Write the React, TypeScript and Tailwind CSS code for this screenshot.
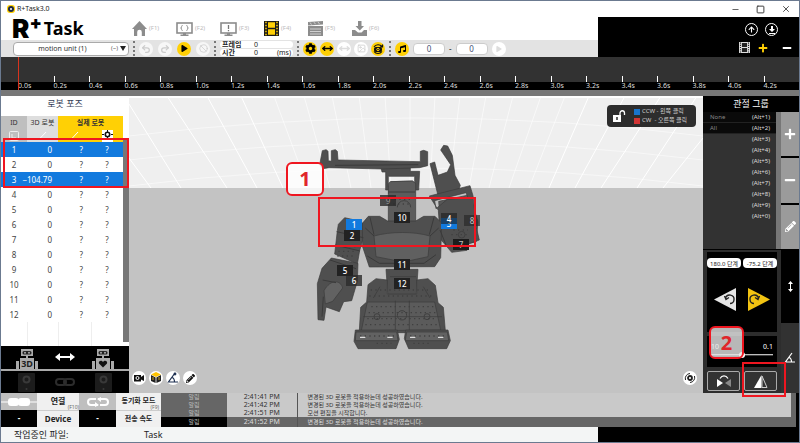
import type { ReactNode } from 'react';
import { Undo2, Redo2, Ban, MoveHorizontal, Image, Minus, Square, X } from 'lucide-react';
import { FaPlay, FaPlus, FaMinus, FaPencilAlt, FaMusic, FaArrowUp, FaCog } from 'react-icons/fa';

const poses = [
  { id: 1, value: '0', selected: true },
  { id: 2, value: '0', selected: false },
  { id: 3, value: '−104.79', selected: true },
  { id: 4, value: '0', selected: false },
  { id: 5, value: '0', selected: false },
  { id: 6, value: '0', selected: false },
  { id: 7, value: '0', selected: false },
  { id: 8, value: '0', selected: false },
  { id: 9, value: '0', selected: false },
  { id: 10, value: '0', selected: false },
  { id: 11, value: '0', selected: false },
  { id: 12, value: '0', selected: false },
];

const ticks = Array.from({ length: 22 }, (_, i) => `${(i * 0.2).toFixed(1)}s`);

const joints = [
  { id: 9, pos: 'left-[64px] top-[55px]', color: 'bg-[#2a2a2a]/80 text-[#8a8a8a]' },
  { id: 8, pos: 'left-[148px] top-[75px]', color: 'bg-[#2a2a2a]/70 text-[#bbb]' },
  { id: 7, pos: 'left-[137px] top-[99px]', color: 'bg-[#1c1c1c] text-[#bbb]' },
  { id: 6, pos: 'left-[30px] top-[135px]', color: 'bg-[#2a2a2a]/80 text-white' },
  { id: 5, pos: 'left-[21px] top-[125px]', color: 'bg-[#222] text-white' },
  { id: 2, pos: 'left-[28px] top-[90px]', color: 'bg-[#222] text-white' },
  { id: 1, pos: 'left-[30px] top-[79px]', color: 'bg-[#127ade] text-white' },
  { id: 10, pos: 'left-[78px] top-[72px]', color: 'bg-[#222] text-white' },
  { id: 11, pos: 'left-[78px] top-[119px]', color: 'bg-[#222] text-white' },
  { id: 12, pos: 'left-[78px] top-[138px]', color: 'bg-[#222] text-white' },
  { id: 3, pos: 'left-[125px] top-[78px]', color: 'bg-[#127ade] text-white' },
  { id: 4, pos: 'left-[125px] top-[73px]', color: 'bg-[#1c1c1c]/60 text-white' },
];

const groups = [
  { name: 'None', key: '(Alt+1)' },
  { name: 'All', key: '(Alt+2)' },
  { name: '', key: '(Alt+3)' },
  { name: '', key: '(Alt+4)' },
  { name: '', key: '(Alt+5)' },
  { name: '', key: '(Alt+6)' },
  { name: '', key: '(Alt+7)' },
  { name: '', key: '(Alt+8)' },
  { name: '', key: '(Alt+9)' },
  { name: '', key: '(Alt+0)' },
];

const logs = [
  { time: '2:41:41 PM', text: '변경된 3D 로봇을 적용하는데 성공하였습니다.' },
  { time: '2:41:42 PM', text: '변경된 3D 로봇을 적용하는데 성공하였습니다.' },
  { time: '2:41:51 PM', text: '모션 편집을 시작합니다.' },
  { time: '2:41:52 PM', text: '변경된 3D 로봇을 적용하는데 성공하였습니다.' },
];

const MonitorIcon = ({ children }: { children: ReactNode }) => (
  <svg viewBox="0 0 17 14" className="h-3.5 w-[17px] shrink-0">
    <rect x="1" y="1" width="15" height="10" fill="#fff" stroke="#8c8c8c" strokeWidth="1.6" />
    <path d="M7 11h3v1.500h2.500V14h-8v-1.500H7z" fill="#8c8c8c" />
    {children}
  </svg>
);

const FilmIcon = ({ frame, cell }: { frame: string; cell: string }) => (
  <svg viewBox="0 0 15 15" className="h-full w-full">
    <rect width="15" height="15" fill={frame} />
    <path d="M4 1.200h7v5.600H4zM4 8.200h7v5.600H4z" fill={cell} />
    <path d="M2 .8v14M13 .8v14" stroke={cell} strokeWidth="1.500" strokeDasharray="1.500 1.500" />
  </svg>
);

const menu = [
  {
    key: '(F1)',
    icon: (
      <svg viewBox="0 0 15 15" className="h-[15px] w-[15px]" fill="#8c8c8c">
        <path d="M7.500 0 15 8h-2v7H9.800v-4a2.300 2.300 0 0 0-4.600 0v4H2V8H0z" />
      </svg>
    ),
  },
  {
    key: '(F2)',
    icon: (
      <MonitorIcon>
        <path d="M6.500 3.500c-1 0-.9.6-.9 1.300S5.200 6 4.700 6c.5 0 .9.500.9 1.200s-.1 1.300.9 1.300M10.500 3.500c1 0 .9.600.9 1.300s.4 1.200.9 1.200c-.5 0-.9.500-.9 1.200s.1 1.300-.9 1.300" fill="none" stroke="#8c8c8c" />
      </MonitorIcon>
    ),
  },
  {
    key: '(F3)',
    icon: (
      <MonitorIcon>
        <path d="M8.500 3v4M8.500 8v1.200" stroke="#777" strokeWidth="1.300" />
      </MonitorIcon>
    ),
  },
  { key: '(F4)', icon: <span className="h-[15px] w-[15px]"><FilmIcon frame="#1a1a1a" cell="#ffd005" /></span> },
  {
    key: '(F5)',
    icon: (
      <svg viewBox="0 0 15 15" className="h-[15px] w-[15px]" fill="#8c8c8c">
        <path d="M0 5h15v10H0zM0 1l15-1v3.500L0 4.500z" />
        <path d="m2 1.500 1.500 2M6 1.200l1.500 2M10 1l1.500 2M2 8h11M2 10.500h11M2 13h11" stroke="#fff" strokeWidth=".6" />
      </svg>
    ),
  },
  {
    key: '(F6)',
    icon: (
      <svg viewBox="0 0 15 15" className="h-[15px] w-[15px]" fill="#8c8c8c">
        <path d="M6 0h3.500v5H12l-4.200 4.500L3.500 5H6z" />
        <path d="M0 9h3l3 2.500h3.500L12 9h3v6H0z" />
      </svg>
    ),
  },
];

const Dots = () => <span className="h-[15px] border-l-2 border-dotted border-[#777]" />;

function Round({ label, color, children }: { label: string; color: string; children: ReactNode }) {
  return (
    <button aria-label={label} className={`flex h-3.5 w-3.5 shrink-0 items-center justify-center rounded-full ${color}`}>
      {children}
    </button>
  );
}

function TitleBar() {
  return (
    <div className="flex h-4 items-center bg-white pl-1.5 pr-2">
      <svg viewBox="0 0 8 8" className="mr-0.5 h-2 w-2">
        <rect width="8" height="8" rx="3" fill="#ffd005" />
        <circle cx="4" cy="4" r="3" fill="#1d2942" />
        <circle cx="4" cy="4" r="1" fill="#fff" />
      </svg>
      <span className="flex-1 text-[7px] text-[#222]">R+Task3.0</span>
      <div className="flex gap-4 text-[#333]">
        <button aria-label="Minimize"><Minus size={9} strokeWidth={2} /></button>
        <button aria-label="Maximize"><Square size={9} strokeWidth={2.5} /></button>
        <button aria-label="Close"><X size={10} strokeWidth={2} /></button>
      </div>
    </div>
  );
}

function Header() {
  return (
    <header className="flex">
      <div className="min-w-0 flex-1 bg-white">
        <div className="flex h-[23px] items-center">
          <div className="flex w-[131px] shrink-0 pl-[11px] leading-none text-black">
            <span className="font-['Inter',sans-serif] text-[26px] leading-[23px] font-black">R</span>
            <span className="font-['Inter',sans-serif] text-[18px] leading-3 font-black">+</span>
            <span className="pt-px pl-0.5 text-[18px] leading-5 font-bold">Task</span>
          </div>
          <nav className="flex">
            {menu.map((m) => (
              <button key={m.key} className="flex w-11 items-center gap-0.5 text-[6px] text-[#bbb]">
                {m.icon}
                {m.key}
              </button>
            ))}
          </nav>
        </div>
        <div className="flex h-[17px] items-center bg-[#e3e3e3] pl-3">
          <div className="mr-1 flex h-3.5 w-[116px] items-center rounded-sm border border-[#aaa] bg-white pr-0.5">
            <select aria-label="모션 유닛" className="min-w-0 flex-1 appearance-none text-center text-[7px] leading-3 text-[#333]">
              <option>motion unit (1)</option>
            </select>
            <span className="mr-0.5 text-[6px] text-[#666]">(~)</span>
            <svg viewBox="0 0 6 5" className="h-[5px] w-1.5"><path d="M0 0h6L3 5z" fill="#222" /></svg>
          </div>
          <Dots />
          <div className="mx-1 flex gap-[5px]">
            <Round label="실행 취소" color="bg-[#f7f7f7] text-[#ccc]"><Undo2 size={10} strokeWidth={3} /></Round>
            <Round label="다시 실행" color="bg-[#f7f7f7] text-[#ccc]"><Redo2 size={10} strokeWidth={3} /></Round>
            <Round label="재생" color="bg-[#ffd005] text-black"><FaPlay size={7} /></Round>
            <Round label="정지" color="bg-[#f7f7f7] text-[#ccc]"><Ban size={9} strokeWidth={2} /></Round>
          </div>
          <Dots />
          <div className="mx-1 flex w-[73px] flex-col gap-px text-[7px] leading-[7px] text-[#222]">
            <label className="flex h-[7px] items-center rounded-sm bg-white pl-0.5">
              <span className="w-5 shrink-0 font-bold">프레임</span>
              <input className="w-7 text-center" defaultValue="0" />
            </label>
            <label className="flex h-[7px] items-center rounded-sm bg-white pl-0.5">
              <span className="w-5 shrink-0 font-bold">시간</span>
              <input className="w-7 text-center" defaultValue="0" />
              <span className="flex-1 pr-0.5 text-right">(ms)</span>
            </label>
          </div>
          <Dots />
          <div className="mx-1 flex gap-[3px]">
            <Round label="설정" color="bg-[#ffd005] text-black"><FaCog size={11} /></Round>
            <Round label="폭 맞춤" color="bg-[#ffd005] text-black"><MoveHorizontal size={11} strokeWidth={3} /></Round>
            <Round label="간격" color="bg-white text-[#ddd]"><MoveHorizontal size={11} strokeWidth={3} /></Round>
            <Round label="그림" color="bg-white text-[#ccc]"><Image size={9} strokeWidth={2} /></Round>
            <Round label="회전" color="bg-[#ffd005] text-black">
              <svg viewBox="0 0 12 12" className="h-3 w-3" fill="none" stroke="#111">
                <path d="M2 8.500a5 5 0 0 0 8 0M2 4a5 5 0 0 1 8-.5M10.500 1.500v2.500H8" strokeWidth="1.200" />
                <rect x="2.500" y="4.500" width="7" height="4" rx="1" fill="#111" />
                <circle cx="6" cy="6.500" r="1.200" stroke="#ffd005" />
              </svg>
            </Round>
          </div>
          <Dots />
          <div className="ml-1 flex items-center gap-1 text-[8px] text-[#445073]">
            <Round label="음악" color="bg-[#ffd005] text-black"><FaMusic size={8} /></Round>
            <input aria-label="시작" className="h-3 w-8 rounded-sm border border-[#ccc] bg-white text-center" defaultValue="0" />
            <span className="text-[#222]">-</span>
            <input aria-label="끝" className="h-3 w-8 rounded-sm border border-[#ccc] bg-white text-center" defaultValue="0" />
            <Round label="음악 재생" color="bg-white text-[#ddd]"><FaPlay size={6} /></Round>
          </div>
        </div>
      </div>
      <div className="flex w-[201px] flex-col items-end justify-between bg-black pt-1.5 pb-1 pr-[7px] text-white">
        <div className="flex gap-[7px] pr-3.5">
          <button aria-label="올리기" className="flex h-[13px] w-[13px] items-center justify-center rounded-full border border-white"><FaArrowUp size={7} /></button>
          <button aria-label="내리기" className="flex h-[13px] w-[13px] items-center justify-center rounded-full border border-white">
            <svg viewBox="0 0 8 8" className="h-2 w-2" fill="#fff"><path d="M3 0h2v3h2L4 6 1 3h2zM1 7h6v1H1z" /></svg>
          </button>
        </div>
        <div className="flex items-center">
          <button aria-label="프레임 보기" className="mr-2 h-[11px] w-[11px]"><FilmIcon frame="#ddd" cell="#222" /></button>
          <button aria-label="추가" className="mr-3.5 text-[#ffd005]"><FaPlus size={10} /></button>
          <button aria-label="삭제"><FaMinus size={10} /></button>
        </div>
      </div>
    </header>
  );
}

function Timeline() {
  return (
    <div className="relative border-b-[6px] border-[#777] bg-gradient-to-b from-[#323232] from-75% to-black to-75% pl-[17px]">
      <div className="grid h-[33px] grid-cols-22 items-end">
        {ticks.map((t) => (
          <div key={t} className="flex flex-col text-[7px] leading-2 text-[#ddd]">
            <span className="h-1.5 w-px bg-white" />
            <span>{t}</span>
          </div>
        ))}
      </div>
      <span className="absolute top-0 left-[17px] h-[33px] w-px bg-[#d8331d]" />
    </div>
  );
}

const RobotIcon = ({ children }: { children: ReactNode }) => (
  <svg viewBox="0 0 22 20" className="h-5 w-[22px]" fill="#aaa">
    <path d="M5 0h12v7H5zM10 7h2v3h-2zM4 9h14v11H4zM0 12h3v8H0zM19 12h3v8h-3z" />
    <rect x="6.500" y="2" width="9" height="3.500" rx="1.500" fill="#222" />
    <circle cx="9" cy="3.700" r="1" />
    <circle cx="13" cy="3.700" r="1" />
    {children}
  </svg>
);

const DeviceIcon = () => (
  <svg viewBox="0 0 17 19" className="h-[19px] w-[17px]">
    <rect width="17" height="19" rx="1" fill="#1c1c1c" />
    <circle cx="8.500" cy="6.500" r="3" fill="none" stroke="#393939" strokeWidth="2" />
    <circle cx="8.500" cy="16" r="1" fill="#393939" />
  </svg>
);

function PosePanel() {
  return (
    <aside className="relative flex w-32 shrink-0 flex-col bg-white">
      <h2 className="h-5 pt-0.5 text-center text-[9px] leading-3 text-[#333c55]">로봇 포즈</h2>
      <div className="flex flex-1">
        <table className="h-fit w-[122px] table-fixed border-collapse text-[8px] text-[#444]">
          <colgroup>
            <col className="w-[26px]" />
            <col className="w-[31px]" />
            <col className="w-[33px]" />
            <col className="w-8" />
          </colgroup>
          <thead>
            <tr className="h-[13px] text-[7px] leading-3 text-[#333]">
              <th className="bg-[#bfbfbf] font-normal">ID</th>
              <th className="bg-[#dedede] font-normal">3D 로봇</th>
              <th colSpan={2} className="bg-[#ffd005] font-bold">실제 로봇</th>
            </tr>
            <tr className="h-[13px]">
              <td className="bg-[#bfbfbf]">
                <svg viewBox="0 0 10 10" className="mx-auto h-2.5 w-2.5" fill="none" stroke="#eee"><rect x=".5" y=".5" width="9" height="9" rx="1" /><path d="M3 3v4h4" /></svg>
              </td>
              <td className="bg-[#dedede]">
                <svg viewBox="0 0 10 10" className="mx-auto h-2.5 w-2.5" fill="none" stroke="#fff"><path d="M8 1 1 8.500h8" /></svg>
              </td>
              <td className="bg-[#ffd005]">
                <svg viewBox="0 0 10 10" className="mx-auto h-2.5 w-2.5" fill="none" stroke="#fff"><path d="M8 1 1 8.500h8" /></svg>
              </td>
              <td className="bg-[#ffd005]">
                <svg viewBox="0 0 11 12" className="mx-auto h-3 w-[11px]">
                  <rect width="11" height="12" fill="#fff" />
                  <circle cx="5.500" cy="4.500" r="2.200" fill="none" stroke="#111" strokeWidth="1.600" />
                  <path d="M5.500 0v2M5.500 7v2M0 4.500h2M9 4.500h2" stroke="#111" />
                </svg>
              </td>
            </tr>
          </thead>
          <tbody>
            {poses.map((p) => (
              <tr key={p.id} className={`h-[15px] leading-3 ${p.selected ? 'bg-[#127ade] text-white' : ''}`}>
                <td className="text-center">{p.id}</td>
                <td className="text-right">
                  <span className="-ml-3 pr-1.5 whitespace-nowrap">{p.value}</span>
                </td>
                <td className="pr-2 text-right">?</td>
                <td className="text-center">?</td>
              </tr>
            ))}
            <tr className="h-6">
              <td className="border-r border-[#eee]" />
              <td className="border-r border-[#eee]" />
              <td className="border-r border-[#eee]" />
              <td />
            </tr>
          </tbody>
        </table>
        <div className="mt-6 mb-1 flex-1 bg-[#777]" />
      </div>
      <div className="flex h-[23px] items-end justify-between bg-black px-[15px] pt-1">
        <RobotIcon>
          <text x="11" y="18" textAnchor="middle" fontSize="9" fontWeight="700" fill="#222">3D</text>
        </RobotIcon>
        <svg viewBox="0 0 20 8" className="mb-2 h-2 w-5" fill="#fff"><path d="M0 4 5 0v3h10V0l5 4-5 4V5H5v3z" /></svg>
        <RobotIcon>
          <path d="M11 18.500 7 14.500c-1-2.500 2.500-4 4-1.500 1.500-2.500 5-1 4 1.500z" fill="#111" />
        </RobotIcon>
      </div>
      <div className="flex h-6 items-center justify-between border-t-2 border-[#aaa] bg-black px-[17px]">
        <DeviceIcon />
        <svg viewBox="0 0 20 8" className="h-2 w-5" fill="none" stroke="#2c2c2c" strokeWidth="2"><rect x="1" y="1" width="10" height="6" rx="3" /><rect x="9" y="1" width="10" height="6" rx="3" /></svg>
        <DeviceIcon />
      </div>
      <div className="absolute top-[42px] left-0.5 h-[50px] w-[126px] border-2 border-[#ef1620]" />
    </aside>
  );
}

// Front view of the assembled humanoid
const Robot = () => (
  <svg viewBox="108 30 600 639" className="h-[213px] w-[200px]">
    <g fill="#4f4f4f" stroke="#3b3b3b" strokeWidth="2" strokeLinejoin="round">
      <path fillRule="evenodd" d="M303 113h88v11h28l-3 56h-12v12h-78v-12h-9v-54h-11zm22 26v32l8-16 65-2 6 8v-22z" />
      <path d="M127 62l12-3 5 5 1 28 9 2V62l12-3 6 5 2 26 247 5V64l10-3 12 4v42l-24 6-112 4-160-4-18 3-10-12z" />
      <path d="M330 155l68-2 9 8v115h-82V162z" fill="#5c5c5c" />
      <path d="M450 101l14-5 10 40 28-10 10-22-30-44 9-14 12 2 14 28 8 60 16 30-8 24-60 2z" />
      <path d="M478 240l-2-26 94-20 24 82-6 60-60 10-40-30z" fill="#585858" />
      <path fillRule="evenodd" d="M448 198l122-31 9 30 10 95 9 38-33 12-4 19-46 6-34-40-6-86zm16 14 4 24 34-28 62-4-6-16z" />
      <path d="M175 283l19-20 48 11 17 18-20 70-7 40-68-30 8-70z" />
      <path d="M154 384l80 16-2 54-17 58-24 3-13 30-40-14-6 40-18-2-2-108 14-46z" />
      <path d="M132 482c20-36 50-32 56-8l-30 40-22 8z" fill="#626262" />
      <path d="M247 280l18-21h34l24 14h84l24-14h34l20 20-3 104-18 27-196 1-20-60z" />
      <path d="M282 318c50-14 120-14 168 0l-6 62-74 16-82-16z" fill="#606060" />
      <path d="M318 418h96l-6 84h-84z" />
      <path d="M264 464l24-18 34 4v42h88v-42l34-4 22 20 8 52 16 14 6 70-50 6h-158l-50-6 4-70 18-16z" />
      <path d="M262 516h202l18 84-238 2z" fill="#5b5b5b" />
      <path d="M226 600h126l6 28-10 28H234l-12-22zM377 600h127l7 32-11 24H386l-13-30z" />
      <path d="M228 606h122l4 26H226zM380 606h122l4 26H376z" fill="#626262" />
    </g>
    <g fill="none" stroke="#3a3a3a" strokeWidth="3">
      <path d="M165 106l250-2M325 186h80M270 262l12 52M462 262l-14 52M262 378l36 22h134l36-26M282 318l-26-24M450 318l26-24" />
      <path d="M170 305l80 18M165 345l75 18M150 390l78 26M128 450l40 8M130 500l-4 60M480 300l20 50" />
      <path d="M330 440h78M300 470l-20 34M430 470l20 34M346 512v88M388 512v88M250 560h236" strokeWidth="2" />
    </g>
    <g fill="none" stroke="#404040" strokeWidth="4" strokeDasharray="4 10">
      <path d="M272 480h180M268 498h190M274 530h186M266 548h202M262 566h210M256 584h220M180 350h56M175 364h56M172 378h56M520 300h44M514 314h56M344 208h50M340 222h54M240 618h104M390 618h108M290 640h44M400 640h50" />
    </g>
    <g fill="none" stroke="#404040" strokeWidth="3">
      <circle cx="366" cy="556" r="14" />
      <circle cx="291" cy="560" r="9" />
      <circle cx="441" cy="560" r="9" />
      <circle cx="545" cy="314" r="10" />
      <path d="M352 232a20 20 0 0 1 40 0" />
    </g>
    <path d="M240 622h16M322 622h16M390 622h16M474 622h16" stroke="#ddd" strokeWidth="4" />
  </svg>
);

function Viewport() {
  return (
    <main className="relative min-w-0 flex-1 overflow-hidden bg-[#c3c3c3]">
      <svg viewBox="0 0 574 92" preserveAspectRatio="none" className="absolute top-0 left-0 h-[92px] w-full">
        <rect width="574" height="92" fill="#efefef" />
        <g stroke="#fff" fill="none">
          <path d="M0 1h574" strokeWidth="2" />
          <path d="M0 8l52 84M0 62l22 30M38 0l60 92M78 0l50 92M112 0l42 92M460 0l-40 92M496 0l-50 92M532 0l-60 92M568 0l-60 92M574 42l-40 50" />
          <path d="M145 0l34 92M175 0l26 92M203 0l19 92M230 0l12 92M256 0l6 92M281 0v92M306 0l-5 92M331 0l-11 92M357 0l-17 92M384 0l-24 92M412 0l-32 92M436 0l-36 92" strokeWidth=".6" />
          <path d="M0 40q287-36 574 0M0 64q287-36 574 0M0 90q287-36 574 0" strokeWidth=".5" />
        </g>
      </svg>

      <div className="relative mx-auto mt-11 h-[213px] w-[200px]">
        <Robot />
        {joints.map((j) => (
          <span key={j.id} className={`absolute flex h-[11px] w-4 items-center justify-center text-[8px] leading-none font-medium ${j.pos} ${j.color}`}>
            {j.id}
          </span>
        ))}
        <div className="absolute top-[57px] left-0.5 h-[50px] w-[158px] border-2 border-[#ef1620]" />
        <div className="absolute top-[22px] -left-[30px] flex h-[34px] w-[38px] items-center justify-center rounded-md border-2 border-[#ef1620] bg-white/80 text-xl font-bold text-[#e0262b]">1</div>
      </div>

      <div className="absolute top-[9px] right-[7px] flex h-[22px] w-[89px] items-center gap-2 rounded bg-[#2d2d2d] pl-1.5 text-[6px] leading-[9px] text-[#ccc]">
        <svg viewBox="0 0 13 12" className="h-3 w-[13px] shrink-0">
          <path d="M0 5h8v7H0z" fill="#fff" />
          <path d="M7 5V3a2.200 2.200 0 0 1 4.500 0v2" fill="none" stroke="#fff" strokeWidth="1.300" />
          <path d="M4 7v3" stroke="#2d2d2d" strokeWidth="1.500" />
        </svg>
        <div className="whitespace-nowrap">
          <p className="flex items-center gap-0.5"><span className="h-1.5 w-1.5 bg-[#1874cc]" />CCW - 왼쪽 클릭</p>
          <p className="flex items-center gap-0.5"><span className="h-1.5 w-1.5 bg-[#d23434]" />CW &nbsp;- 오른쪽 클릭</p>
        </div>
      </div>

      <div className="absolute right-1.5 bottom-2 left-[3px] flex gap-[3px]">
        <Round label="카메라" color="bg-white">
          <svg viewBox="0 0 12 10" className="h-2.5 w-3"><path d="M1 2h7v2l3-2v6L8 6.500V8.500H1z" fill="#111" /><circle cx="4.500" cy="5" r="1.500" fill="none" stroke="#fff" /></svg>
        </Round>
        <Round label="큐브" color="bg-white">
          <svg viewBox="0 0 12 12" className="h-3 w-3"><path d="M6 0l5 2.500L6 5 1 2.500z" fill="#ffc400" /><path d="M1 3l4.600 2.500V11L1 9zM11 3 6.400 5.500V11L11 9z" fill="#222" /><path d="M3 5v3M9 5v3" stroke="#c9a227" /></svg>
        </Round>
        <Round label="각도" color="bg-white">
          <svg viewBox="0 0 12 12" className="h-3 w-3" fill="none" stroke="#1d2f50" strokeWidth="1.200"><path d="M8 1 1.500 10H11M5 5.500c2 .5 2.500 2 2.500 4.500" /><circle cx="8" cy="2" r=".8" /></svg>
        </Round>
        <Round label="편집" color="bg-white text-[#111]"><FaPencilAlt size={9} /></Round>
        <span className="flex-1" />
        <Round label="시점 회전" color="bg-white">
          <svg viewBox="0 0 12 12" className="h-3 w-3" fill="none" stroke="#222"><circle cx="6" cy="6" r="2" strokeWidth="1.800" /><path d="M1.500 8A5 5 0 0 1 6 1.500M10.500 4A5 5 0 0 1 6 10.500" /></svg>
        </Round>
      </div>
    </main>
  );
}

function JointPanel() {
  return (
    <aside className="flex w-24 shrink-0 flex-col bg-black text-white">
      <h2 className="h-4 text-center text-[9px] leading-4">관절 그룹</h2>
      <div className="flex h-[137px]">
        <ul className="flex-1 bg-[#323232] text-[6px] leading-[11px]">
          {groups.map((g) => (
            <li key={g.key} className={`flex justify-between pr-1.5 pl-[7px] text-[#ddd] ${g.name ? 'border-b border-[#222] bg-[#0a0a0a] leading-[10px]' : ''}`}>
              <span className="text-[#888]">{g.name}</span>
              <span>{g.key}</span>
            </li>
          ))}
        </ul>
        <div className="w-[5px] bg-[#777]" />
        <div className="flex w-[18px] flex-col gap-0.5">
          <button aria-label="그룹 추가" className="flex flex-1 items-center justify-center bg-[#9b9b9b]"><FaPlus size={12} /></button>
          <button aria-label="그룹 삭제" className="flex flex-1 items-center justify-center bg-[#9b9b9b]"><FaMinus size={12} /></button>
          <button aria-label="그룹 편집" className="flex flex-1 items-center justify-center bg-[#9b9b9b]"><FaPencilAlt size={11} /></button>
        </div>
      </div>
      <div className="flex flex-1 pt-px">
        <div className="flex flex-1 flex-col gap-1 bg-[#2d2d2d] px-1 pt-0.5 pb-0.5">
          <div className="h-20 bg-black pt-1.5">
            <div className="flex gap-0.5 text-[6px]">
              <input aria-label="CCW 각도" className="h-2.5 w-0 flex-1 rounded-sm bg-white text-center text-[#222]" defaultValue="180.0 단계" />
              <input aria-label="CW 각도" className="h-2.5 w-0 flex-1 rounded-sm bg-white text-center text-[#222]" defaultValue="-75.2 단계" />
            </div>
            <div className="mt-5 flex justify-center gap-3">
              <button aria-label="반시계 방향">
                <svg viewBox="0 0 22 23" className="h-[23px] w-[22px]"><path d="M0 11.500 22 0v23z" fill="#e6e6e6" /><path d="M12 9.500c1-4 8.500-3 8 2 0 2.500-2 4-4 4M10.500 8l1.500 3.500 3-2" fill="none" stroke="#222" strokeWidth="1.400" /></svg>
              </button>
              <button aria-label="시계 방향">
                <svg viewBox="0 0 22 23" className="h-[23px] w-[22px]"><path d="M22 11.500 0 0v23z" fill="#f2c312" /><path d="M10 9.500c-1-4-8.500-3-8 2 0 2.500 2 4 4 4M11.500 8 10 11.500l-3-2" fill="none" stroke="#222" strokeWidth="1.400" /></svg>
              </button>
            </div>
          </div>
          <div className="relative h-[31px] bg-black px-1 pt-1.5">
            <div className="flex justify-between text-[7px] leading-[10px]">
              <span>10</span>
              <span>0.1</span>
            </div>
            <input
              type="range"
              aria-label="속도"
              defaultValue={50}
              className="block h-1.5 w-full appearance-none bg-gradient-to-b from-transparent from-33% via-white via-33% to-transparent to-67% [&::-webkit-slider-thumb]:h-1.5 [&::-webkit-slider-thumb]:w-1.5 [&::-webkit-slider-thumb]:appearance-none [&::-webkit-slider-thumb]:rounded-full [&::-webkit-slider-thumb]:bg-white"
            />
            <div className="absolute -top-[10px] left-0.5 flex h-[33px] w-[35px] items-center justify-center rounded-md border-2 border-[#ef1620] bg-[#e6e6e6]/80 text-xl font-bold text-[#e0262b]">2</div>
          </div>
          <div className="relative flex h-5 gap-1">
            <button aria-label="좌우 교환" className="flex flex-1 items-center justify-center rounded-xs border border-[#aaa] bg-[#333]">
              <svg viewBox="0 0 14 12" className="h-3 w-3.5"><path d="M0 4l6 4-6 4z" fill="#fff" /><path d="M14 4 8 8l6 4z" fill="#888" /><path d="M3 3.500C5 0 9 0 11 3.500" fill="none" stroke="#fff" strokeWidth="1.200" /></svg>
            </button>
            <button aria-label="대칭" className="flex flex-1 items-center justify-center rounded-xs border border-[#aaa] bg-[#333]">
              <svg viewBox="0 0 14 13" className="h-[13px] w-3.5"><path d="M7.500 0v13H0z" fill="#fff" /><path d="M8 1v11.500h5z" fill="#333" stroke="#ccc" /></svg>
            </button>
            <div className="absolute -top-[9px] -right-[9px] h-[35px] w-11 border-2 border-[#ef1620]" />
          </div>
        </div>
        <div className="flex w-[18px] flex-col">
          <button aria-label="단계" className="flex h-[73px] items-center justify-center bg-black">
            <svg viewBox="0 0 5 11" className="h-[11px] w-[5px]" fill="#fff"><path d="M2.500 0 5 3H3v5h2l-2.500 3L0 8h2V3H0z" /></svg>
          </button>
          <button aria-label="각도" className="flex flex-1 items-center justify-center bg-[#323232]">
            <svg viewBox="0 0 12 12" className="h-3 w-3" fill="none" stroke="#fff" strokeWidth="1.200"><path d="M8 1 1.500 10H11M5 5.500c2 .5 2.500 2 2.500 4.500" /></svg>
          </button>
        </div>
      </div>
    </aside>
  );
}

function Footer() {
  return (
    <footer>
      <div className="flex h-[34px]">
        <div className="grid shrink-0 grid-cols-[36px_42px_37px_45px] grid-rows-2 text-center text-[8px] leading-4 font-bold text-[#222]">
          <button aria-label="연결 상태" className="flex items-center bg-[#bfbfbf]">
            <svg viewBox="0 0 36 8" className="h-2 w-full" fill="#fff"><path d="M0 3.500h36v1H0z" /><rect x="7" width="11" height="8" rx="3" /><rect x="17" width="12" height="8" rx="3" /></svg>
          </button>
          <span className="relative bg-[#f0f0f0]">연결<small className="absolute right-0 bottom-0 text-[5px] leading-[6px] font-normal text-[#666]">(F10)</small></span>
          <button aria-label="동기화" className="flex items-center justify-center bg-[#bfbfbf]">
            <svg viewBox="0 0 22 10" className="h-2.5 w-[22px]" fill="none" stroke="#fff" strokeWidth="2"><path d="M9 2H4a3 3 0 0 0 0 6h7M13 8h5a3 3 0 0 0 0-6h-7" /><path d="M14 0l-4 2 4 3zM8 5l4 3-4 2z" fill="#fff" stroke="none" /></svg>
          </button>
          <span className="relative bg-[#f0f0f0] text-[7px] whitespace-nowrap">동기화 모드<small className="absolute right-0.5 bottom-0 text-[5px] leading-[6px] font-normal text-[#666]">(F9)</small></span>
          <span className="bg-black text-white">-</span>
          <span className="border-t border-[#ccc] bg-[#f0f0f0]">Device</span>
          <span className="bg-black text-white">-</span>
          <span className="border-t border-[#ccc] bg-[#f0f0f0] text-[7px]">전송 속도</span>
        </div>
        <table className="h-fit flex-1 border-collapse bg-[#c9c9c9] text-[7px] leading-2 text-[#333]">
          <tbody>
            {logs.map((l) => (
              <tr key={l.time} className="group h-2 last:h-2.5 last:bg-[#666] last:text-[#ddd]">
                <td className="w-[66px] bg-[#666] text-center text-[6px] text-[#bbb] group-last:bg-black">알림</td>
                <td className="w-[70px] border-r border-[#555] text-center">{l.time}</td>
                <td className="pl-2.5 text-[6px]">{l.text}</td>
              </tr>
            ))}
          </tbody>
        </table>
        <div className="flex w-2 bg-black">
          <div className="w-[5px] bg-[#666]" />
        </div>
      </div>
      <div className="flex h-[15px] text-[9px] leading-[15px] text-[#222]">
        <div className="flex flex-1 bg-[#f3f5f5] pl-[13px]">
          <span className="w-[130px]">작업중인 파일:</span>
          <span>Task</span>
        </div>
        <div className="w-[201px] bg-black" />
      </div>
    </footer>
  );
}

export default function App() {
  return (
    <div className="border border-[#6b7a90] bg-black font-['Noto_Sans','Noto_Sans_CJK_KR',sans-serif]">
      <TitleBar />
      <Header />
      <Timeline />
      <div className="flex">
        <PosePanel />
        <Viewport />
        <JointPanel />
      </div>
      <Footer />
    </div>
  );
}
